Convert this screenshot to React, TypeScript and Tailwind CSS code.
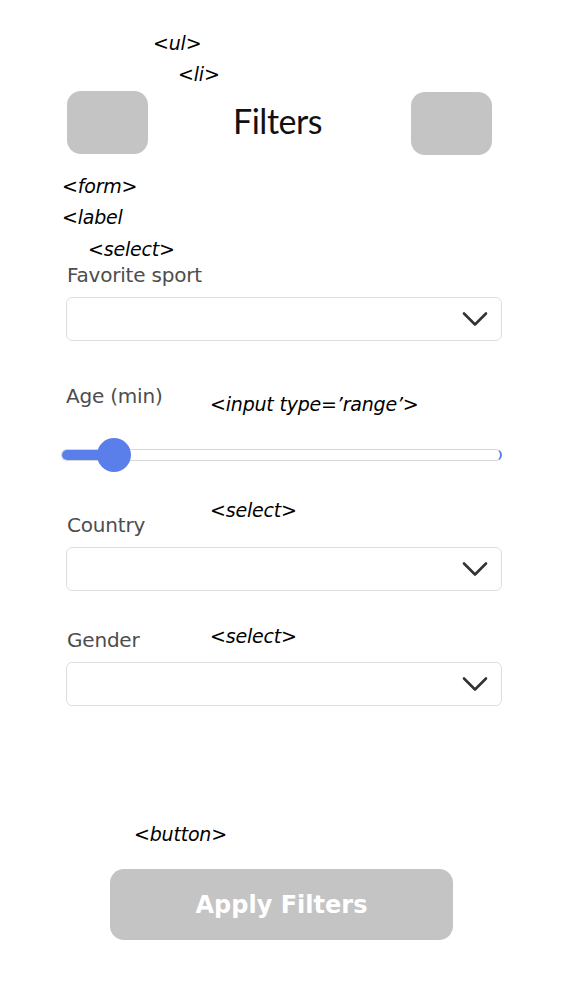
import React from "react";

const ann = "italic text-[19px] leading-[22px] text-black [font-family:'DejaVu_Sans',sans-serif] tracking-[-0.2px]";
const label = "text-[20px] leading-[24px] text-[#4d4d4d] [font-family:'DejaVu_Sans',sans-serif] tracking-[-0.2px]";

function Chevron() {
  return (
    <svg width="26" height="16" viewBox="0 0 26 16" fill="none">
      <path d="M2 2.5 L13 13.5 L24 2.5" stroke="#333333" strokeWidth="2.6" strokeLinecap="round" strokeLinejoin="round" />
    </svg>
  );
}

function SelectBox() {
  return (
    <div className="ml-[5px] h-[44px] rounded-[6px] border-[1.5px] border-[#dedede] bg-white flex items-center justify-end pr-[13px]">
      <Chevron />
    </div>
  );
}

export default function App() {
  return (
    <div className="w-[563px] h-[1001px] bg-white flex flex-col px-[61px]">
      <div className={`${ann} mt-[32px] ml-[92px]`}>&lt;ul&gt;</div>
      <div className={`${ann} mt-[9px] ml-[117px]`}>&lt;li&gt;</div>

      <div className="mt-[5px] h-[64px] flex items-center justify-between ml-[6px] mr-[10px]">
        <div className="w-[81px] h-[63px] rounded-[14px] bg-[#c4c4c4]" />
        <div
          className="text-[34px] leading-none text-[#111] tracking-[-0.5px] mt-[-2px] ml-[-4px]"
          style={{ fontFamily: '"Lato", sans-serif' }}
        >
          Filters
        </div>
        <div className="w-[81px] h-[63px] rounded-[14px] bg-[#c4c4c4] mt-[2px]" />
      </div>

      <div className={`${ann} mt-[21px] ml-[1px]`}>&lt;form&gt;</div>
      <div className={`${ann} mt-[9px] ml-[1px]`}>&lt;label</div>
      <div className={`${ann} mt-[10px] ml-[27px]`}>&lt;select&gt;</div>

      <div className={`mt-[3px] ml-[6px] ${label}`}>Favorite sport</div>
      <div className="mt-[10px]">
        <SelectBox />
      </div>

      <div className="mt-[43px] grid grid-cols-[149px_1fr] items-start">
        <div className={`ml-[5px] ${label}`}>Age (min)</div>
        <div className={`${ann} mt-[9px]`}>&lt;input type=’range’&gt;</div>
      </div>

      <div className="relative mt-[23px] h-[34px] flex items-center">
        <div className="w-full h-[12px] rounded-full border border-[#d6d6d6] border-r-[2px] border-r-[#5b7fea] bg-white overflow-hidden flex">
          <div className="w-[54px] h-full bg-[#5b7fea]" />
        </div>
        <div className="absolute left-[36px] top-0 w-[34px] h-[34px] rounded-full bg-[#5b7fea]" />
      </div>

      <div className="mt-[27px] grid grid-cols-[149px_1fr] items-start">
        <div className={`ml-[6px] mt-[14px] ${label}`}>Country</div>
        <div className={ann}>&lt;select&gt;</div>
      </div>
      <div className="mt-[10px]">
        <SelectBox />
      </div>

      <div className="mt-[34px] grid grid-cols-[149px_1fr] items-start">
        <div className={`ml-[6px] mt-[3px] ${label}`}>Gender</div>
        <div className={ann}>&lt;select&gt;</div>
      </div>
      <div className="mt-[10px]">
        <SelectBox />
      </div>

      <div className={`${ann} mt-[117px] ml-[73px]`}>&lt;button&gt;</div>

      <div className="mt-[24px] ml-[49px] w-[343px] h-[71px] rounded-[14px] bg-[#c4c4c4] flex items-center justify-center">
        <span className="text-white font-bold text-[24px] leading-none [font-family:'DejaVu_Sans',sans-serif]">
          Apply Filters
        </span>
      </div>
    </div>
  );
}
